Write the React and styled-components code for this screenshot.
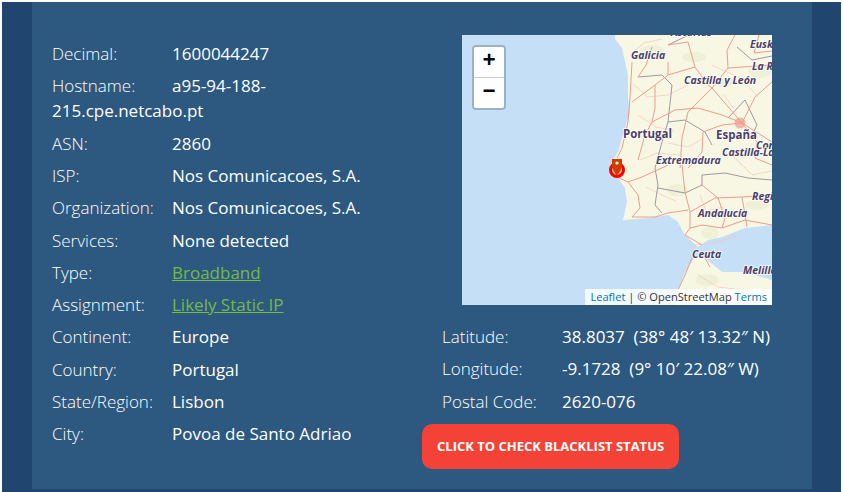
import React from 'react'
import styled, { createGlobalStyle } from 'styled-components'

const GlobalStyle = createGlobalStyle`
  html, body { margin: 0; padding: 0; background: #fff; }
  body { font-family: "Open Sans", "Noto Sans", sans-serif; }
`

const Page = styled.div`
  margin: 2px 2px 0 2px;
  height: 490px;
  box-sizing: border-box;
  padding: 0 29px 3px 30px;
  background: #20466f;
  overflow: hidden;
`

const Panel = styled.div`
  height: 487px;
  box-sizing: border-box;
  padding: 33px 20px 0;
  background: #2d5880;
  display: flex;
  gap: 20px;
  color: #fff;
`

const LeftColumn = styled.div`
  width: 350px;
  padding-top: 5.6px;
`

const RightColumn = styled.div`
  width: 370px;
`

const Row = styled.div`
  font-size: 17px;
  line-height: 25.5px;
  margin-bottom: 6.8px;
`

const RightRows = styled.div`
  padding-left: 20px;
  margin-top: 19px;
`

const Label = styled.span`
  display: inline-block;
  width: 120px;
  font-weight: 300;
`

const Value = styled.span`
  font-weight: 500;
`

const RightValue = styled.span`
  font-weight: 400;
`

const GreenLink = styled.a`
  color: #72bb44;
  text-decoration: underline;
`

const MapBox = styled.div`
  position: relative;
  width: 310px;
  height: 270px;
  margin-left: 40px;
  background: #c4dff6;
  overflow: hidden;
`

const ZoomControl = styled.div`
  position: absolute;
  top: 10px;
  left: 10px;
  border: 2px solid rgba(0, 0, 0, 0.2);
  border-radius: 4px;
  background-clip: padding-box;
`

const ZoomButton = styled.a`
  display: block;
  width: 30px;
  height: 30px;
  text-align: center;
  font: bold 22px/30px "Liberation Mono", monospace;
  color: #000;
  background: #fff;
  border-bottom: ${p => (p.$last ? 'none' : '1px solid #ccc')};
  border-radius: ${p => (p.$last ? '0 0 2px 2px' : '2px 2px 0 0')};
`

const Attribution = styled.div`
  position: absolute;
  right: 0;
  bottom: 0;
  padding: 0 5px;
  font-size: 11.1px;
  line-height: 16px;
  color: #333;
  background: rgba(255, 255, 255, 0.8);
  white-space: nowrap;
`

const AttributionLink = styled.a`
  color: #0078a8;
`

const CheckButton = styled.a`
  display: inline-block;
  margin-top: 3px;
  padding: 0 15px;
  height: 45px;
  line-height: 45px;
  border-radius: 10px;
  background: #f44336;
  color: #fff;
  font-size: 13px;
  font-weight: 700;
  text-transform: uppercase;
  white-space: nowrap;
`

const MapLabel = styled.text`
  font-family: "Open Sans", sans-serif;
  font-weight: 700;
  font-style: ${p => (p.$plain ? 'normal' : 'italic')};
  font-size: ${p => (p.$plain ? 11.5 : 10.5)}px;
  fill: #4d3f6b;
  stroke: rgba(255, 255, 255, 0.7);
  stroke-width: 2px;
  paint-order: stroke;
`

const COAST = 'M153 0 L153 4 L160 13 L163 27 L166 40 L166 63 L168 77 L163 93 L156 117 L150 127 L148 135 L156 143 L163 153 L165 167 L161 185 L186 183 L206 180 L216 187 L223 200 L236 212 L246 205 L260 202 L283 193 L310 190 L310 0 Z'
const AFRICA = 'M310 245 L283 237 L260 237 L243 223 L233 222 L223 237 L216 255 L213 270 L310 270 Z'

const ROADS = [
  'M170 27 L168 63 L166 87 L160 113 L155 123',
  'M170 67 L193 50 L206 40 L206 27',
  'M193 50 L193 73 L190 87 L183 100 L176 125',
  'M206 40 L233 32 L246 50 L250 53 L280 88',
  'M250 53 L226 77 L220 103 L218 133',
  'M250 53 L266 33 L265 15 L273 0',
  'M266 33 L310 30',
  'M233 32 L226 7 L206 10',
  'M280 88 L293 62 L310 47',
  'M280 88 L310 107',
  'M280 88 L260 90 L241 97 L240 117 L226 133',
  'M280 88 L295 107 L293 123 L310 130',
  'M190 87 L213 75 L236 73 L260 80 L280 88',
  'M155 142 L166 147 L180 142 L206 130',
  'M166 147 L176 160 L178 173 L170 182',
  'M170 182 L193 182 L206 178 L226 175',
  'M220 130 L223 157 L228 177 L228 193 L223 200 L240 210',
  'M228 177 L253 163 L280 162 L310 160',
  'M228 193 L240 190 L260 193 L283 185 L310 190',
  'M260 193 L263 183 L256 163 L240 150',
  'M280 162 L285 192',
  'M230 223 L223 240 L216 255',
  'M243 223 L248 232',
  'M176 42 L184 30 L190 12',
  'M297 0 L292 18 L310 16',
]

// thinner local roads, only there to give the land its texture
const MINOR_ROADS = [
  'M168 20 L182 8 L200 4',
  'M172 50 L186 62 L206 60 L226 50',
  'M176 80 L194 92 L212 96',
  'M206 108 L226 112 L240 104',
  'M178 125 L196 118 L218 120',
  'M184 152 L200 160 L214 166',
  'M238 160 L244 176 L262 172',
  'M270 120 L290 140 L310 136',
  'M250 30 L280 44 L296 62',
  'M232 210 L252 208 L276 200',
  'M236 240 L256 252 L290 256',
  'M262 60 L272 74',
]

const BORDERS = [
  'M176 42 L200 40 L210 50 L206 87 L223 85 L243 97 L250 110',
  'M206 87 L200 107 L193 133 L196 150 L193 170 L200 178',
  'M196 153 L223 158 L240 150 L240 140 L263 138 L286 143 L310 145',
  'M266 83 L283 65 L295 90 L290 100',
  'M206 10 L233 -3',
  'M275 12 L290 25 L310 21',
]

const GREENS = [
  [190, 16, 12, 6],
  [232, 22, 12, 5],
  [262, 48, 10, 4],
  [298, 36, 12, 7],
  [215, 155, 10, 6],
  [248, 198, 9, 6],
  [245, 245, 12, 6],
  [295, 170, 12, 5],
]

const IberiaMap = () => (
  <svg width="310" height="270" viewBox="0 0 310 270">
    <path d={COAST} fill="#f8f7e4" />
    <path d={AFRICA} fill="#f8f7e4" />
    {GREENS.map(([cx, cy, rx, ry], i) => (
      <ellipse key={i} cx={cx} cy={cy} rx={rx} ry={ry} fill="#dfe8c2" opacity="0.4" />
    ))}
    <circle cx="278" cy="88" r="5.5" fill="#f2b6aa" />
    {MINOR_ROADS.map((d, i) => (
      <path key={i} d={d} fill="none" stroke="#f6c9b4" strokeWidth="0.7" />
    ))}
    {BORDERS.map((d, i) => (
      <path key={i} d={d} fill="none" stroke="#85808f" strokeWidth="0.8" />
    ))}
    {ROADS.map((d, i) => (
      <path key={i} d={d} fill="none" stroke="#f09b8d" strokeWidth="1" />
    ))}
    <MapLabel x="169" y="24">Galicia</MapLabel>
    <MapLabel x="222" y="49">Castilla y León</MapLabel>
    <MapLabel x="288" y="13">Eusk</MapLabel>
    <MapLabel x="290" y="35">La R</MapLabel>
    <MapLabel x="209" y="1">Asturias</MapLabel>
    <MapLabel $plain x="161" y="103">Portugal</MapLabel>
    <MapLabel $plain x="254" y="104">España</MapLabel>
    <MapLabel x="294" y="114">Cor</MapLabel>
    <MapLabel x="260" y="121">Castilla-La</MapLabel>
    <MapLabel x="194" y="129">Extremadura</MapLabel>
    <MapLabel x="290" y="165">Regi</MapLabel>
    <MapLabel x="236" y="182">Andalucía</MapLabel>
    <MapLabel x="230" y="223">Ceuta</MapLabel>
    <MapLabel x="281" y="239">Melilla</MapLabel>
    <circle cx="155" cy="135" r="6.5" fill="#e8452a" fillOpacity="0.4" stroke="#f00" strokeWidth="3" />
    <path d="M150 124 L150 130 Q150 134 155 141 Q160 134 160 130 L160 124 Z" fill="#d23c00" />
    <circle cx="155" cy="128" r="1.6" fill="#fff" />
  </svg>
)

const App = () => (
  <>
    <GlobalStyle />
    <Page>
      <Panel>
        <LeftColumn>
          <Row><Label>Decimal:</Label><Value>1600044247</Value></Row>
          <Row><Label>Hostname:</Label><Value>a95-94-188-215.cpe.netcabo.pt</Value></Row>
          <Row><Label>ASN:</Label><Value>2860</Value></Row>
          <Row><Label>ISP:</Label><Value>Nos Comunicacoes, S.A.</Value></Row>
          <Row><Label>Organization:</Label><Value>Nos Comunicacoes, S.A.</Value></Row>
          <Row><Label>Services:</Label><Value>None detected</Value></Row>
          <Row><Label>Type:</Label><GreenLink>Broadband</GreenLink></Row>
          <Row><Label>Assignment:</Label><GreenLink>Likely Static IP</GreenLink></Row>
          <Row><Label>Continent:</Label><Value>Europe</Value></Row>
          <Row><Label>Country:</Label><Value>Portugal</Value></Row>
          <Row><Label>State/Region:</Label><Value>Lisbon</Value></Row>
          <Row><Label>City:</Label><Value>Povoa de Santo Adriao</Value></Row>
        </LeftColumn>
        <RightColumn>
          <MapBox>
            <IberiaMap />
            <ZoomControl>
              <ZoomButton>+</ZoomButton>
              <ZoomButton $last>−</ZoomButton>
            </ZoomControl>
            <Attribution>
              <AttributionLink>Leaflet</AttributionLink> | © OpenStreetMap <AttributionLink>Terms</AttributionLink>
            </Attribution>
          </MapBox>
          <RightRows>
            <Row><Label>Latitude:</Label><RightValue>38.8037 &nbsp;(38° 48′ 13.32″ N)</RightValue></Row>
            <Row><Label>Longitude:</Label><RightValue>-9.1728 &nbsp;(9° 10′ 22.08″ W)</RightValue></Row>
            <Row><Label>Postal Code:</Label><RightValue>2620-076</RightValue></Row>
          </RightRows>
          <CheckButton>Click to Check Blacklist Status</CheckButton>
        </RightColumn>
      </Panel>
    </Page>
  </>
)

export default App
